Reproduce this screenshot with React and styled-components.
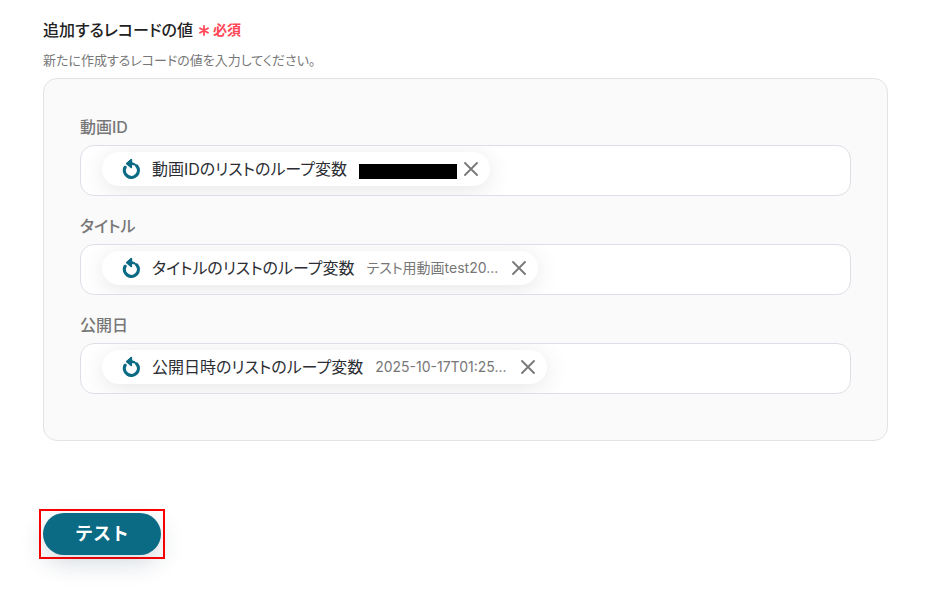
import React, { useState } from "react"
import styled, { createGlobalStyle } from "styled-components"

const GlobalStyle = createGlobalStyle`
* {
    padding: 0;
    margin: 0;
    box-sizing: border-box;
}

body {
    background-color: #ffffff;
    color: #222222;
    font-family: Inter, "Noto Sans CJK JP", sans-serif;
    font-feature-settings: "palt";
}

button, input {
    font: inherit;
    border: none;
    background: none;
}
`

const Page = styled.main`
padding: 18px 38px 32px 43px;
`

const Heading = styled.h1`
display: flex;
align-items: center;
gap: 6px;
font-size: 16px;
font-weight: 500;
line-height: 24px;
`

const Required = styled.span`
display: flex;
align-items: center;
gap: 4px;
color: #ff4757;
font-size: 14px;
font-weight: 700;
`

const Description = styled.p`
margin: 8px 0;
color: #777777;
font-size: 13px;
line-height: 20px;
`

const Panel = styled.section`
display: flex;
flex-direction: column;
gap: 18px;
padding: 36px 36px 46px;
border: 1px solid #e3e3e3;
border-radius: 14px;
background-color: #fafafa;
`

const Field = styled.div`
display: flex;
flex-direction: column;
gap: 6px;
`

const FieldLabel = styled.label`
color: #777777;
font-size: 16px;
font-weight: 500;
line-height: 24px;
`

const TokenBox = styled.div`
display: flex;
align-items: center;
padding: 6px 21px 9px;
border: 1px solid #dedfe6;
border-radius: 14px;
background-color: #ffffff;
overflow: hidden;
`

const TokenInput = styled.input`
flex: 1;
min-width: 0;
height: 34px;
padding-left: 8px;
font-size: 16px;
outline: none;
`

const Token = styled.span`
display: flex;
align-items: center;
height: 34px;
padding: 0 12px 0 20px;
border-radius: 17px;
background-color: #ffffff;
box-shadow: 0 4px 24px rgba(0, 0, 0, 0.1);
white-space: nowrap;
`

const TokenName = styled.span`
margin: 0 12px;
color: #2b2d33;
font-size: 16px;
line-height: 24px;
`

const TokenSample = styled.span`
color: #777777;
font-size: 14px;
line-height: 24px;
`

const Redaction = styled.span`
width: 98px;
height: 15px;
margin: 4px -7px 0 0;
background-color: #000000;
`

const RemoveButton = styled.button`
display: flex;
margin-left: 14px;
color: #777777;
cursor: pointer;
`

const Marker = styled.div`
width: fit-content;
margin: 68px 0 0 -4px;
padding: 2px;
border: 2px solid #ff0000;
`

const TestButton = styled.button`
display: block;
height: 42px;
padding: 0 32px;
border-radius: 21px;
background-color: #0b6a84;
box-shadow: 0 8px 24px rgba(20, 50, 80, 0.18);
color: #ffffff;
font-size: 18px;
font-weight: 700;
font-feature-settings: normal;
line-height: 42px;
cursor: pointer;
`

const LoopIcon = () => (
    <svg width="18" height="22" viewBox="0 0 18 22" aria-hidden="true">
        <path d="M14.8 8A7 7 0 1 1 3.1 9.3" fill="none" stroke="#0b6a84" strokeWidth="3.2" strokeLinecap="round" />
        <path d="M4.6 5.7 9.4 1.6v3q3.2.4 5.4 3.4" fill="#0b6a84" stroke="#0b6a84" strokeWidth="1.4" strokeLinejoin="round" />
        <path d="M4.6 5.7 9.4 9.6v-8z" fill="#0b6a84" stroke="#0b6a84" strokeWidth="1.4" strokeLinejoin="round" />
    </svg>
)

const CloseIcon = () => (
    <svg width="14" height="14" viewBox="0 0 14 14" aria-hidden="true">
        <path d="M1 1l12 12M13 1L1 13" stroke="currentColor" strokeWidth="1.8" strokeLinecap="round" />
    </svg>
)

const AsteriskIcon = () => (
    <svg width="10" height="12" viewBox="0 0 10 12" aria-hidden="true">
        <path d="M5 2v9M1 4.2l8 4.6M9 4.2l-8 4.6" stroke="currentColor" strokeWidth="1.8" strokeLinecap="round" />
    </svg>
)

const initialFields = [
    { id: "videoId", label: "動画ID", token: "動画IDのリストのループ変数", sample: null },
    { id: "title", label: "タイトル", token: "タイトルのリストのループ変数", sample: "テスト用動画test20..." },
    { id: "publishedAt", label: "公開日", token: "公開日時のリストのループ変数", sample: "2025-10-17T01:25..." },
]

export default function App() {
    const [fields, setFields] = useState(initialFields)

    const removeToken = (id) => {
        setFields(fields.map((item) => (item.id === id ? { ...item, token: null } : item)))
    }

    return (
        <Page>
            <GlobalStyle />
            <Heading>
                追加するレコードの値
                <Required>
                    <AsteriskIcon />
                    必須
                </Required>
            </Heading>
            <Description>新たに作成するレコードの値を入力してください。</Description>
            <Panel>
                {fields.map((item) => (
                    <Field key={item.id}>
                        <FieldLabel htmlFor={item.id}>{item.label}</FieldLabel>
                        <TokenBox>
                            {item.token && (
                                <Token>
                                    <LoopIcon />
                                    <TokenName>{item.token}</TokenName>
                                    {item.sample ? <TokenSample>{item.sample}</TokenSample> : <Redaction />}
                                    <RemoveButton type="button" aria-label="削除" onClick={() => removeToken(item.id)}>
                                        <CloseIcon />
                                    </RemoveButton>
                                </Token>
                            )}
                            <TokenInput id={item.id} type="text" />
                        </TokenBox>
                    </Field>
                ))}
            </Panel>
            <Marker>
                <TestButton type="button">テスト</TestButton>
            </Marker>
        </Page>
    )
}
